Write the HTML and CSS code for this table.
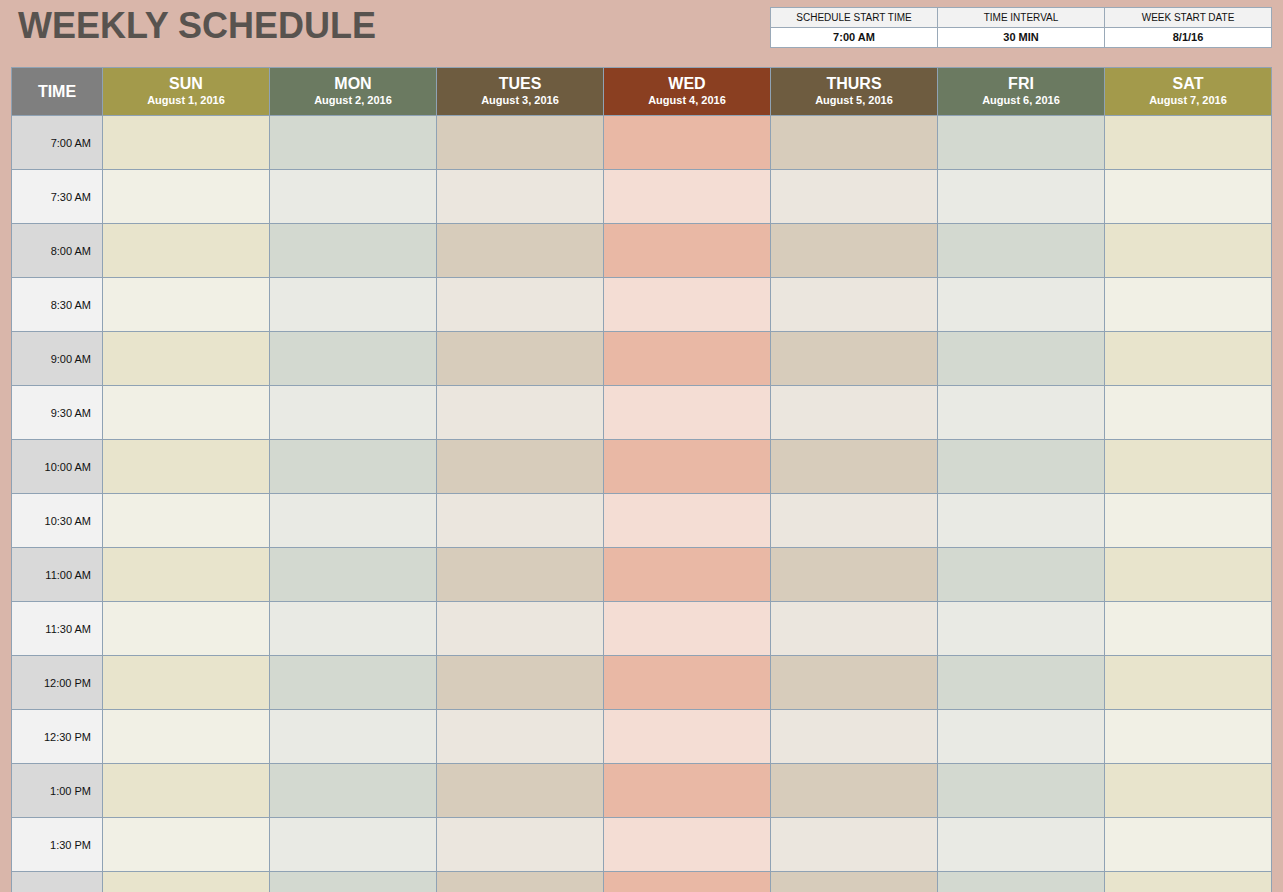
FILE: index.html
```html
<!DOCTYPE html>
<html>
<head>
<meta charset="utf-8">
<title>Weekly Schedule</title>
<link rel="stylesheet" href="styles.css">
</head>
<body>
<div class="top">
  <h1 class="title">WEEKLY SCHEDULE</h1>
  <div class="info">
    <div class="info-h">SCHEDULE START TIME</div>
    <div class="info-h">TIME INTERVAL</div>
    <div class="info-h">WEEK START DATE</div>
    <div class="info-v">7:00 AM</div>
    <div class="info-v">30 MIN</div>
    <div class="info-v">8/1/16</div>
  </div>
</div>
<div class="sched" id="sched">
  <div class="hd hd-time">TIME</div>
  <div class="hd c-sun"><span class="day">SUN</span><span class="date">August 1, 2016</span></div>
  <div class="hd c-mon"><span class="day">MON</span><span class="date">August 2, 2016</span></div>
  <div class="hd c-tue"><span class="day">TUES</span><span class="date">August 3, 2016</span></div>
  <div class="hd c-wed"><span class="day">WED</span><span class="date">August 4, 2016</span></div>
  <div class="hd c-tue"><span class="day">THURS</span><span class="date">August 5, 2016</span></div>
  <div class="hd c-mon"><span class="day">FRI</span><span class="date">August 6, 2016</span></div>
  <div class="hd c-sun"><span class="day">SAT</span><span class="date">August 7, 2016</span></div>
</div>
<script src="script.js"></script>
</body>
</html>
```
FILE: script.js
```js
(function () {
  var sched = document.getElementById('sched');
  var kinds = ['sun', 'mon', 'tue', 'wed', 'tue', 'mon', 'sun'];
  var times = ['7:00 AM','7:30 AM','8:00 AM','8:30 AM','9:00 AM','9:30 AM','10:00 AM','10:30 AM','11:00 AM','11:30 AM','12:00 PM','12:30 PM','1:00 PM','1:30 PM','2:00 PM'];
  times.forEach(function (t, i) {
    var odd = i % 2 === 0 ? 'a' : 'b';
    var tc = document.createElement('div');
    tc.className = 'cell time time-' + odd;
    tc.textContent = t;
    sched.appendChild(tc);
    kinds.forEach(function (k) {
      var c = document.createElement('div');
      c.className = 'cell ' + k + '-' + odd;
      sched.appendChild(c);
    });
  });
})();
```
FILE: styles.css
```css
html, body {
  margin: 0;
  padding: 0;
  overflow: hidden;
}
body {
  background: #d9b6aa;
  font-family: "Liberation Sans", Arial, sans-serif;
  width: 1283px;
  height: 892px;
}
.top {
  display: flex;
  justify-content: space-between;
  align-items: flex-start;
  height: 67px;
  padding-left: 18px;
  padding-right: 11px;
  box-sizing: border-box;
}
.title {
  margin: 7px 0 0 0;
  font-size: 36px;
  font-weight: bold;
  color: #58534f;
  line-height: 38px;
}
.info {
  margin-top: 7px;
  display: grid;
  grid-template-columns: repeat(3, 167px);
  border-left: 1px solid #9aa9b8;
  border-top: 1px solid #9aa9b8;
}
.info-h, .info-v {
  border-right: 1px solid #9aa9b8;
  border-bottom: 1px solid #9aa9b8;
  text-align: center;
  color: #111;
  height: 19px;
  line-height: 19px;
}
.info-h { background: #f2f2f2; font-size: 10px; }
.info-v { background: #ffffff; font-weight: bold; font-size: 11px; }

.sched {
  margin-left: 11px;
  display: grid;
  grid-template-columns: 91px repeat(7, 167px);
  grid-auto-rows: 54px;
  grid-template-rows: 48px;
  border-left: 1px solid #8fa2b4;
  border-top: 1px solid #8fa2b4;
  width: 1260px;
}
.hd {
  border-right: 1px solid #8fa2b4;
  border-bottom: 1px solid #8fa2b4;
  color: #fff;
  font-weight: bold;
  display: flex;
  flex-direction: column;
  align-items: center;
  justify-content: center;
  padding-bottom: 2px;
  box-sizing: border-box;
}
.hd-time {
  background: #7f7f7f;
  font-size: 16px;
  padding-bottom: 0;
}
.day { font-size: 16px; line-height: 18px; }
.date { font-size: 11px; line-height: 14px; }
.c-sun { background: #a39a4b; }
.c-mon { background: #6b7a61; }
.c-tue { background: #6e5c40; }
.c-wed { background: #8a3f21; }

.cell {
  border-right: 1px solid #8fa2b4;
  border-bottom: 1px solid #8fa2b4;
}
.time {
  font-size: 11px;
  color: #111;
  text-align: right;
  padding-right: 11px;
  padding-top: 1px;
  line-height: 53px;
  box-sizing: border-box;
}
.time-a { background: #d9d9d9; }
.time-b { background: #f2f2f2; }
.sun-a { background: #e8e4cc; }
.sun-b { background: #f1f0e5; }
.mon-a { background: #d3d9d0; }
.mon-b { background: #e9eae4; }
.tue-a { background: #d7ccbb; }
.tue-b { background: #ebe6de; }
.wed-a { background: #e9b8a5; }
.wed-b { background: #f4ddd4; }
```
